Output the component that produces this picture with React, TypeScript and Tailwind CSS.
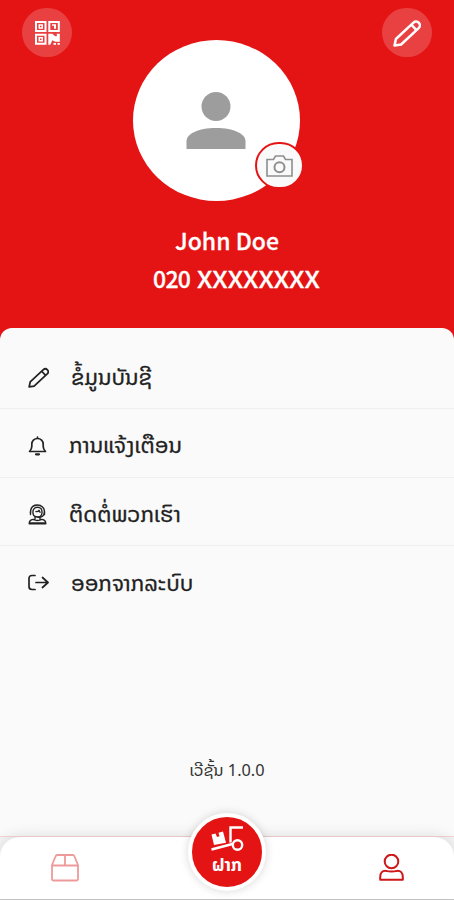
import React from "react";

const latin = "font-['Noto_Sans_CJK_SC','Noto_Sans',sans-serif]";
const lao = "font-['Noto_Sans_Lao','DejaVu_Sans',sans-serif]";

function QrIcon() {
  return (
    <svg className="h-[24px] w-[25px]" viewBox="0 0 25 24" fill="#fff">
      <path fillRule="evenodd" d="M0 0h11.500v11H0zM2 2v7h7.500V2zM13.300 0h11.500v11H13.300zM15.300 2v7h7.500V2zM0 12.700h11.500v11H0zM2 14.700v7h7.500v-7z" />
      <path fillRule="evenodd" d="M3.500 3.300h4.500v4.500H3.500zM5 4.800v1.500h1.500V4.800zM17 3.300h4v4.500h-2v-3h-2zM3.500 16h4.500v4.500H3.500zM5 17.500V19h1.500v-1.500zM13.300 12.700h4l3 2.500h1.500v-2.500h3v8h-4.500l-3-1.500-2 4.500h-2zM18.500 22h2.500v1.700h-2.500zM22.500 22h2.300v1.700h-2.300z" />
    </svg>
  );
}

function PencilIcon({ className, width }: { className: string; width: number }) {
  return (
    <svg className={className} viewBox="0 0 28 28" fill="none" stroke="currentColor" strokeWidth={width} strokeLinejoin="round">
      <g transform="translate(1.500 26.500) rotate(-43)">
        <path d="M0 0 5.500-3.800H29.500a3.800 3.800 0 0 1 0 7.600H5.500Z" />
        <path d="M26.500-3.800V3.800" />
      </g>
    </svg>
  );
}

function BellIcon() {
  return (
    <svg className="h-5 w-[19px]" viewBox="0 0 19 20" fill="none" stroke="currentColor" strokeWidth="1.700" strokeLinejoin="round" strokeLinecap="round">
      <path d="M9.500 1v1.500M1.500 15.500h16c-1.200-1.300-2.300-2.700-2.300-5V8.300c0-3.400-2.400-5.800-5.700-5.800S3.800 4.900 3.800 8.300v2.200c0 2.300-1.100 3.700-2.300 5Z" />
      <path d="M8 18.300h3" strokeWidth="2.200" />
    </svg>
  );
}

function SupportIcon() {
  return (
    <svg className="h-[21px] w-[19px]" viewBox="0 0 19 21" fill="none" stroke="currentColor" strokeWidth="1.400" strokeLinejoin="round" strokeLinecap="round">
      <path d="M2.500 8.500C2.500 3.500 5.500 1 9.500 1s7 3 7 7-3 5.500-6.500 5.300" />
      <path d="M5 9C4.500 5.500 6.500 3.300 9.500 3.300S14.300 5 14 9c-.4 2.600-2.200 4-4 4C7 13 5 11.500 5 9Z" />
      <path d="M8 7.500c1.500.3 2.500-.3 3-1.200l1 2M2.500 8v2.500M16.500 8v2.500" />
      <path d="M7 13.200v2M12 13.200v2M1.200 19.700c0-2.500.8-3.800 3.800-4.300 3 1.400 6 1.400 9 0 3 .5 3.800 1.800 3.800 4.300Z" />
      <path d="M2 19h15" />
    </svg>
  );
}

function LogoutIcon() {
  return (
    <svg className="-mt-0.5 h-[17px] w-[21px]" viewBox="0 0 21 17" fill="none" stroke="currentColor" strokeWidth="1.700" strokeLinejoin="round" strokeLinecap="round">
      <path d="M7 1.500H4Q1 1.500 1 4.500v8q0 3 3 3h3" />
      <path d="M8 8.500H20M14.500 3.500 20 8.500 14.500 13.500" />
    </svg>
  );
}

function Row({ icon, children, border = true, gap }: { icon: React.ReactNode; children: React.ReactNode; border?: boolean; gap: string }) {
  return (
    <div className={"flex h-[68.300px] shrink-0 items-center pt-[6px] pl-7 text-[#222] " + (border ? "border-b border-[#efefef]" : "")}>
      <span className={"flex shrink-0 items-center " + gap}>{icon}</span>
      <span className={"whitespace-nowrap pb-px text-[22px] leading-7 [-webkit-text-stroke:0.300px_#222] " + lao}>{children}</span>
    </div>
  );
}

export default function App() {
  return (
    <div className="flex h-[900px] w-[454px] flex-col overflow-hidden bg-[#e51414]">
      <header className="flex h-[328px] shrink-0 flex-col px-[22px] pt-2">
        <div className="flex h-[50px] justify-between">
          <button className="flex h-[49px] w-[50px] items-center justify-center rounded-full bg-[#e94141]"><QrIcon /></button>
          <button className="flex h-[49px] w-[50px] items-center justify-center rounded-full bg-[#e94141] text-white"><PencilIcon className="size-[28px]" width={2.5} /></button>
        </div>
        <div className="relative -mt-[18px] ml-[111px] flex h-[161px] w-[167px] items-center justify-center rounded-[50%] bg-white pr-0.5">
          <svg className="h-[58px] w-[60px]" viewBox="0 0 60 58" fill="#9d9d9d">
            <circle cx="30" cy="14.500" r="14.500" />
            <path d="M.5 57V49C.5 42 12 36 30 36s29.500 6 29.500 13v8Z" />
          </svg>
          <div className="absolute top-[102px] left-[122px] flex h-[47px] w-[49px] items-center justify-center rounded-full border-2 border-[#e51414] bg-[#fafafa]">
            <svg className="h-[22px] w-[27px]" viewBox="0 0 27 22" fill="none" stroke="#8e8e8e" strokeWidth="1.600">
              <path d="M1 4.500h6.500L9.500 1h8l2 3.500H26V21H1Z" />
              <circle cx="13.500" cy="12.300" r="5" strokeWidth="2" />
            </svg>
          </div>
        </div>
        <div className={"flex flex-col text-center font-medium text-white [-webkit-text-stroke:0.300px_#fff] " + latin}>
          <div className="mt-5 h-[38px] text-[23px] leading-[38px]">John Doe</div>
          <div className="flex h-[38px] pl-[131px] text-[23px] leading-[38px]">
            <span className="w-[44px] text-left tracking-[-0.7px]">020</span>
            <span className="origin-left scale-x-[1.12] text-left">XXXXXXXX</span>
          </div>
        </div>
      </header>

      <main className="flex h-[508px] shrink-0 flex-col rounded-t-[12px] bg-[#fafafa] pt-[13px]">
        <Row icon={<PencilIcon className="size-[21px]" width={2.3} />} gap="w-[43px]">ຂໍ້ມູນບັນຊີ</Row>
        <Row icon={<BellIcon />} gap="w-[41px]">ການແຈ້ງເຕືອນ</Row>
        <Row icon={<SupportIcon />} gap="w-[41px]">ຕິດຕໍ່ພວກເຮົາ</Row>
        <Row icon={<LogoutIcon />} gap="w-[43px]" border={false}>ອອກຈາກລະບົບ</Row>
        <div className={"mt-auto mb-[51px] text-center text-[16.300px] leading-7 text-[#333] " + lao}>ເວີຊັ້ນ 1.0.0</div>
      </main>

      <div className="flex h-[64px] shrink-0 flex-col border-t border-[#f6d4d6] bg-[#f4f4f4]">
        <nav className="relative flex h-[62px] items-center justify-between rounded-t-[20px] bg-white px-[51px] shadow-[0_-2px_14px_rgba(0,0,0,0.1)]">
          <svg className="h-7 w-7" viewBox="0 0 28 28" fill="none" stroke="#ee9a9a" strokeWidth="1.800" strokeLinejoin="round">
            <path d="M1 11 4.500 2.500Q5 1 6.500 1h15q1.500 0 2 1.500L27 11v14q0 1.500-1.500 1.500h-23Q1 26.500 1 25ZM1 11.500h26M14 1v10" />
          </svg>
          <svg className="mr-[-1px] h-[28px] w-[25px]" viewBox="0 0 25 28" fill="none" stroke="#cd1719" strokeWidth="2">
            <circle cx="12.500" cy="7.500" r="6.800" />
            <path d="M1.200 25.800V23C1.200 18.500 3.500 16.600 7 16.900c3.800 1 7.200 1 11 0 3.500-.3 5.800 1.600 5.800 6.100v2.800Z" strokeLinejoin="round" />
          </svg>
          <button className="absolute -top-[24px] left-[188px] flex size-[78px] flex-col items-center rounded-full border-4 border-white bg-[#e51414] pt-[8px] text-white shadow-[0_0_10px_rgba(0,0,0,0.16)]">
            <svg className="h-[27px] w-[33px]" viewBox="0 0 33 27" fill="none" stroke="#fff" strokeWidth="2.400">
              <path d="m.5 24.500 21-5.500M32 2.500H19.500v15" />
              <circle cx="26.500" cy="20" r="4.700" />
              <path d="m.5 9.500 4-1 1.500 3.500 2.500-.7L7.500 7.700 12 6.500l3 11.300-12 2.200Z" fill="#fff" stroke="none" />
            </svg>
            <span className={"mt-[3px] text-[17.500px] font-bold leading-[20px] " + lao}>ຝາກ</span>
          </button>
        </nav>
        <div className="h-px bg-[#c9c9c9]" />
      </div>
    </div>
  );
}
